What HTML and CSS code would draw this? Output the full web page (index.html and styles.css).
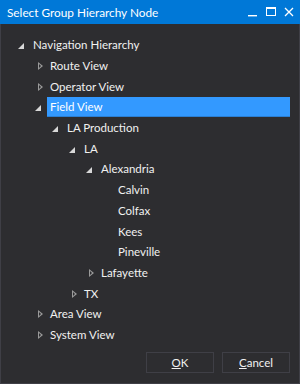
FILE: index.html
```html
<!DOCTYPE html>
<html>
<head>
<meta charset="utf-8">
<link rel="stylesheet" href="styles.css">
</head>
<body>
<div class="window">
  <div class="titlebar">
    <span class="title">Select Group Hierarchy Node</span>
    <div class="caption-buttons">
      <svg class="cap" width="10" height="10" viewBox="0 0 10 10"><rect x="0" y="8" width="9" height="1.4" fill="#fff"/></svg>
      <svg class="cap" width="10" height="10" viewBox="0 0 10 10"><rect x="0.5" y="0.5" width="9" height="8" fill="none" stroke="#fff" stroke-width="1"/><rect x="0" y="0" width="10" height="2" fill="#fff"/></svg>
      <svg class="cap" width="10" height="10" viewBox="0 0 10 10"><path d="M1 1 L9 9 M9 1 L1 9" stroke="#fff" stroke-width="1.3"/></svg>
    </div>
  </div>
  <div class="content">
    <ul class="tree">
      <li>
        <div class="row"><span class="tog exp"></span><span class="label">Navigation Hierarchy</span></div>
        <ul>
          <li><div class="row"><span class="tog col"></span><span class="label">Route View</span></div></li>
          <li><div class="row"><span class="tog col"></span><span class="label">Operator View</span></div></li>
          <li>
            <div class="row"><span class="tog exp"></span><span class="label selected">Field View</span></div>
            <ul>
              <li>
                <div class="row"><span class="tog exp"></span><span class="label">LA Production</span></div>
                <ul>
                  <li>
                    <div class="row"><span class="tog exp"></span><span class="label">LA</span></div>
                    <ul>
                      <li>
                        <div class="row"><span class="tog exp"></span><span class="label">Alexandria</span></div>
                        <ul>
                          <li><div class="row"><span class="tog"></span><span class="label">Calvin</span></div></li>
                          <li><div class="row"><span class="tog"></span><span class="label">Colfax</span></div></li>
                          <li><div class="row"><span class="tog"></span><span class="label">Kees</span></div></li>
                          <li><div class="row"><span class="tog"></span><span class="label">Pineville</span></div></li>
                        </ul>
                      </li>
                      <li><div class="row"><span class="tog col"></span><span class="label">Lafayette</span></div></li>
                    </ul>
                  </li>
                  <li><div class="row"><span class="tog col"></span><span class="label">TX</span></div></li>
                </ul>
              </li>
            </ul>
          </li>
          <li><div class="row"><span class="tog col"></span><span class="label">Area View</span></div></li>
          <li><div class="row"><span class="tog col"></span><span class="label">System View</span></div></li>
        </ul>
      </li>
    </ul>
    <div class="buttons">
      <button class="btn"><u>O</u>K</button>
      <button class="btn"><u>C</u>ancel</button>
    </div>
  </div>
</div>
</body>
</html>
```
FILE: styles.css
```css
* { box-sizing: border-box; }
html, body { margin: 0; padding: 0; }
body {
  width: 300px;
  height: 384px;
  background: #2d2d30;
  font-family: "Lato", "Noto Sans", sans-serif;
  font-size: 11.5px;
  color: #f1f1f1;
}
.window {
  width: 300px;
  height: 384px;
  display: flex;
  flex-direction: column;
  background: #2d2d30;
  border: 1px solid #3f3f46;
  border-top: none;
}
.titlebar {
  height: 24px;
  margin: 0 -1px;
  background: #0078d7;
  display: flex;
  align-items: center;
  justify-content: space-between;
  padding: 0 6px 0 7px;
}
.title {
  color: #ffffff;
  font-size: 11.8px;
}
.caption-buttons {
  display: flex;
  gap: 8px;
  align-items: center;
}
.cap { display: block; }
.content {
  flex: 1;
  display: flex;
  flex-direction: column;
  padding: 11px 9px 10px 15px;
}
.tree, .tree ul {
  list-style: none;
  margin: 0;
  padding: 0;
}
.tree ul { padding-left: 17px; }
.tree { flex: 1; }
.row {
  display: flex;
  align-items: center;
  height: 20.7px;
}
.tog {
  width: 14px;
  height: 20px;
  position: relative;
  flex: none;
}
.tog.exp::before {
  content: "";
  position: absolute;
  left: 2px;
  top: 8px;
  width: 0;
  height: 0;
  border-left: 6px solid transparent;
  border-bottom: 6px solid #d8d8d8;
}
.tog.col::before {
  content: "";
  position: absolute;
  left: 5px;
  top: 6px;
  width: 0;
  height: 0;
  border-top: 4px solid transparent;
  border-bottom: 4px solid transparent;
  border-left: 5px solid #9a9a9a;
}
.tog.col::after {
  content: "";
  position: absolute;
  left: 6px;
  top: 8px;
  width: 0;
  height: 0;
  border-top: 2px solid transparent;
  border-bottom: 2px solid transparent;
  border-left: 2.5px solid #2d2d30;
}
.label {
  padding: 0 3px;
  line-height: 20px;
  white-space: nowrap;
}
.label.selected {
  flex: 1;
  background: #3399ff;
  color: #ffffff;
  border-bottom: 1px solid #2a7fd4;
  line-height: 19px;
}
.buttons {
  display: flex;
  justify-content: flex-end;
  gap: 8px;
  padding-right: 0;
}
.btn {
  width: 68px;
  height: 21px;
  background: #2d2d30;
  border: 1px solid #3f3f46;
  color: #f1f1f1;
  font-family: inherit;
  font-size: 11.5px;
  padding: 0;
}
```
